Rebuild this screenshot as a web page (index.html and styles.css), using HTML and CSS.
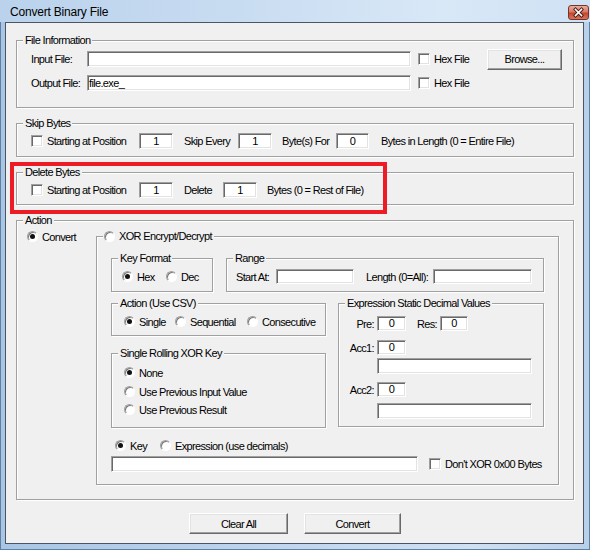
FILE: index.html
```html
<!DOCTYPE html>
<html>
<head>
<meta charset="utf-8">
<title>Convert Binary File</title>
<link rel="stylesheet" href="styles.css">
</head>
<body>
<div class="window">
  <div class="titlebar">
    <span class="title">Convert Binary File</span>
    <span class="close"><svg width="19" height="13" viewBox="0 0 19 13"><path d="M6.5 3.5 L12.5 9.5 M12.5 3.5 L6.5 9.5" stroke="#4a1a12" stroke-width="3.4" stroke-linecap="square" fill="none"/><path d="M6.5 3.5 L12.5 9.5 M12.5 3.5 L6.5 9.5" stroke="#fff" stroke-width="1.6" stroke-linecap="square" fill="none"/></svg></span>
  </div>
  <div class="client">
    <div class="group g-file">
      <div class="cap">File Information</div>
      <div class="row file-row">
        <span class="lbl w-file">Input File:</span>
        <span class="edit e-file"></span>
        <span class="chk"></span>
        <span class="lbl w-hex">Hex File</span>
        <span class="btn b-browse">Browse...</span>
      </div>
      <div class="row file-row second">
        <span class="lbl w-file">Output File:</span>
        <span class="edit e-file">file.exe_</span>
        <span class="chk"></span>
        <span class="lbl w-hex">Hex File</span>
      </div>
    </div>

    <div class="group g-skip">
      <div class="cap">Skip Bytes</div>
      <div class="row byte-row">
        <span class="chk"></span>
        <span class="lbl w-start">Starting at Position</span>
        <span class="edit e-num">1</span>
        <span class="lbl w-skip">Skip Every</span>
        <span class="edit e-num">1</span>
        <span class="lbl w-for">Byte(s) For</span>
        <span class="edit e-num e-narrow">0</span>
        <span class="lbl w-tail">Bytes in Length (0 = Entire File)</span>
      </div>
    </div>

    <div class="group g-del">
      <div class="cap">Delete Bytes</div>
      <div class="row byte-row">
        <span class="chk"></span>
        <span class="lbl w-start">Starting at Position</span>
        <span class="edit e-num">1</span>
        <span class="lbl w-delete">Delete</span>
        <span class="edit e-num">1</span>
        <span class="lbl w-tail2">Bytes (0 = Rest of File)</span>
      </div>
    </div>

    <div class="group g-action">
      <div class="cap">Action</div>
      <div class="act-body">
        <div class="convert-col">
          <div class="opt"><span class="radio on"></span><span>Convert</span></div>
        </div>
        <div class="group g-xor">
          <div class="cap cap-opt"><span class="radio"></span><span>XOR Encrypt/Decrypt</span></div>
          <div class="xor-body">
            <div class="xrow-a">
              <div class="group g-key">
                <div class="cap">Key Format</div>
                <div class="opts key-opts">
                  <span class="radio on"></span><span class="w-hexopt">Hex</span>
                  <span class="radio"></span><span>Dec</span>
                </div>
              </div>
              <div class="group g-range">
                <div class="cap">Range</div>
                <div class="row range-row">
                  <span class="lbl w-startat">Start At:</span>
                  <span class="edit e-start"></span>
                  <span class="lbl w-length">Length (0=All):</span>
                  <span class="edit e-length"></span>
                </div>
              </div>
            </div>

            <div class="xrow-b">
              <div class="xcol">
                <div class="group g-csv">
                  <div class="cap">Action (Use CSV)</div>
                  <div class="opts csv-opts">
                    <span class="radio on"></span><span class="w-single">Single</span>
                    <span class="radio"></span><span class="w-seq">Sequential</span>
                    <span class="radio"></span><span>Consecutive</span>
                  </div>
                </div>
                <div class="group g-roll">
                  <div class="cap">Single Rolling XOR Key</div>
                  <div class="opt roll-opt first"><span class="radio on"></span><span>None</span></div>
                  <div class="opt roll-opt second"><span class="radio"></span><span>Use Previous Input Value</span></div>
                  <div class="opt roll-opt third"><span class="radio"></span><span>Use Previous Result</span></div>
                </div>
              </div>
              <div class="group g-expr">
                <div class="cap">Expression Static Decimal Values</div>
                <div class="erow er-1">
                  <span class="elbl">Pre:</span>
                  <span class="edit e-small">0</span>
                  <span class="lbl w-res">Res:</span>
                  <span class="edit e-small e-res">0</span>
                </div>
                <div class="erow er-2">
                  <span class="elbl">Acc1:</span>
                  <span class="edit e-small">0</span>
                </div>
                <div class="erow er-3">
                  <span class="edit e-long"></span>
                </div>
                <div class="erow er-4">
                  <span class="elbl">Acc2:</span>
                  <span class="edit e-small">0</span>
                </div>
                <div class="erow er-5">
                  <span class="edit e-long"></span>
                </div>
              </div>
            </div>

            <div class="opts key-mode">
              <span class="radio on"></span><span class="w-key">Key</span>
              <span class="radio"></span><span>Expression (use decimals)</span>
            </div>

            <div class="row key-row">
              <span class="edit e-key"></span>
              <span class="chk"></span>
              <span class="lbl w-dont">Don't XOR 0x00 Bytes</span>
            </div>
          </div>
        </div>
      </div>
    </div>

    <div class="btnrow">
      <span class="btn b-clear">Clear All</span>
      <span class="btn b-convert">Convert</span>
    </div>
  </div>
  <div class="annot"></div>
</div>
</body>
</html>
```

FILE: styles.css
```css
* {
  box-sizing: border-box;
}

html, body {
  margin: 0;
  padding: 0;
  background: #ffffff;
}

body {
  font-family: "Liberation Sans", Arial, sans-serif;
  font-size: 11px;
  letter-spacing: -0.65px;
  color: #000000;
}

/* ---------- window frame ---------- */
.window {
  position: relative;
  width: 590px;
  height: 550px;
  display: flex;
  flex-direction: column;
  padding-bottom: 6px;
  background: linear-gradient(to right, #a9c5e5 0%, #bfd5ee 45%, #cfe0f3 80%, #b9d0ea 100%);
  box-shadow: inset 1px 0 0 #60809f, inset -1px 0 0 #60809f, inset 0 -1px 0 #60809f;
  overflow: hidden;
}

.titlebar {
  flex: none;
  height: 22px;
  display: flex;
  align-items: center;
  justify-content: space-between;
  padding: 2px 1px 0 10px;
  background: linear-gradient(to right, #bad2ec 0%, #c8dcf1 40%, #d9e8f7 75%, #cfe1f4 100%);
}

.title {
  font-size: 12px;
  letter-spacing: -0.2px;
  color: #000000;
}

.close {
  width: 21px;
  height: 15px;
  display: flex;
  align-items: center;
  justify-content: center;
  border: 1px solid #7a3226;
  border-radius: 3px;
  background: linear-gradient(to bottom, #e9ad9f 0%, #d97a64 45%, #c5432d 55%, #d4785e 100%);
}

.close svg {
  display: block;
}

.client {
  flex: 1;
  margin: 0 6px 0 5px;
  padding: 17px 0 0 10px;
  background: #f0f0f0;
  border: 1px solid #4b5563;
}

/* ---------- group boxes ---------- */
.group {
  flex: none;
  border: 1px solid #a0a0a0;
  box-shadow: inset 1px 1px 0 #ffffff, 1px 1px 0 #ffffff;
}

.cap {
  display: block;
  width: max-content;
  margin: -7px 0 -6px 6px;
  padding: 0 2px;
  line-height: 13px;
  background: #f0f0f0;
  white-space: nowrap;
}

.g-file,
.g-skip,
.g-del,
.g-action {
  width: 558px;
}

.g-file { height: 68px; }
.g-skip { height: 34px; margin-top: 15px; }
.g-del { height: 33px; margin-top: 15px; }
.g-action { height: 280px; margin-top: 15px; }

/* ---------- controls ---------- */
.row {
  display: flex;
  align-items: center;
  height: 16px;
}

.lbl {
  flex: none;
  white-space: nowrap;
}

.edit {
  flex: none;
  display: block;
  height: 16px;
  line-height: 14px;
  padding: 0 1px;
  background: #ffffff;
  border: 1px solid;
  border-color: #a0a0a0 #ffffff #ffffff #a0a0a0;
  box-shadow: inset 1px 1px 0 #696969, inset -1px -1px 0 #e3e3e3;
  white-space: nowrap;
  overflow: hidden;
}

.chk {
  flex: none;
  width: 12px;
  height: 12px;
  background: #ffffff;
  border: 1px solid;
  border-color: #a0a0a0 #ffffff #ffffff #a0a0a0;
  box-shadow: inset 1px 1px 0 #696969, inset -1px -1px 0 #e3e3e3;
}

.chk + .lbl {
  margin-left: 4px;
}

.radio {
  flex: none;
  position: relative;
  width: 11px;
  height: 11px;
  margin-right: 4px;
  border-radius: 50%;
  background: #ffffff;
  border: 1px solid;
  border-color: #a0a0a0 #ffffff #ffffff #a0a0a0;
  box-shadow: inset 1px 1px 0 #7a7a7a;
}

.radio.on::after {
  content: "";
  position: absolute;
  left: 2px;
  top: 2px;
  width: 5px;
  height: 5px;
  border-radius: 50%;
  background: #111111;
}

.btn {
  flex: none;
  display: flex;
  align-items: center;
  justify-content: center;
  height: 21px;
  background: #f0f0f0;
  border: 1px solid;
  border-color: #ffffff #696969 #696969 #ffffff;
  box-shadow: inset -1px -1px 0 #a0a0a0, inset 1px 1px 0 #e3e3e3;
  white-space: nowrap;
}

.opt,
.opts {
  display: flex;
  align-items: center;
  height: 13px;
  white-space: nowrap;
}

/* ---------- file information ---------- */
.file-row {
  margin-top: 10px;
  padding-left: 14px;
}

.file-row.second {
  margin-top: 8px;
}

.w-file { width: 56px; }
.e-file { width: 324px; }
.e-file + .chk { margin-left: 7px; }
.w-hex { width: 53px; }
.b-browse { width: 75px; }

/* ---------- skip / delete ---------- */
.byte-row {
  margin-top: 9px;
  padding-left: 14px;
}

.w-start { width: 92px; }
.e-num { width: 34px; text-align: center; }
.e-narrow { width: 33px; }
.w-skip { margin-left: 11px; width: 54px; }
.w-for { margin-left: 10px; width: 54px; }
.w-tail { margin-left: 12px; }
.w-delete { margin-left: 11px; width: 39px; }
.w-tail2 { margin-left: 10px; }

/* ---------- action ---------- */
.act-body {
  display: flex;
  margin-top: 15px;
}

.convert-col {
  flex: none;
  width: 79px;
  padding-left: 10px;
}

.convert-col .opt {
  margin-top: -6px;
}

.g-xor {
  width: 463px;
  height: 249px;
}

.cap-opt {
  display: flex;
  align-items: center;
  margin-left: 6px;
  padding-left: 1px;
}

.xor-body {
  padding: 21px 0 0 14px;
}

.xrow-a {
  display: flex;
  gap: 13px;
}

.g-key { width: 102px; height: 34px; }
.g-range { width: 318px; height: 34px; }

.key-opts {
  margin-top: 11px;
  padding-left: 10px;
}

.w-hexopt { width: 29px; }

.range-row {
  margin-top: 10px;
  padding-left: 9px;
  height: 15px;
}

.w-startat { width: 40px; }
.e-start { width: 78px; height: 15px; line-height: 13px; }
.w-length { margin-left: 12px; width: 67px; }
.e-length { width: 99px; height: 15px; line-height: 13px; }

.xrow-b {
  display: flex;
  gap: 12px;
  margin-top: 11px;
}

.xcol {
  flex: none;
  width: 215px;
}

.g-csv { width: 215px; height: 33px; }
.g-roll { width: 215px; height: 75px; margin-top: 17px; }

.csv-opts {
  margin-top: 11px;
  padding-left: 12px;
}

.w-single { width: 36px; }
.w-seq { width: 57px; }

.roll-opt { padding-left: 12px; }
.roll-opt.first { margin-top: 12px; }
.roll-opt.second { margin-top: 6px; }
.roll-opt.third { margin-top: 5px; }

.g-expr { width: 206px; height: 124px; }

.erow {
  display: flex;
  align-items: center;
}

.elbl {
  flex: none;
  width: 38px;
  padding-right: 3px;
  text-align: right;
  white-space: nowrap;
}

.e-small { width: 29px; height: 15px; line-height: 13px; text-align: center; }
.e-res { width: 28px; }
.w-res { margin-left: 11px; width: 23px; }
.e-long { width: 155px; height: 16px; margin-left: 38px; }

.er-1 { margin-top: 12px; }
.er-2 { margin-top: 9px; }
.er-3 { margin-top: 3px; }
.er-4 { margin-top: 8px; }
.er-5 { margin-top: 6px; }

.key-mode {
  margin-top: 11px;
  padding-left: 4px;
}

.w-key { width: 30px; }

.key-row {
  margin-top: 4px;
}

.e-key { width: 307px; }
.e-key + .chk { margin-left: 11px; }

/* ---------- buttons ---------- */
.btnrow {
  width: 558px;
  display: flex;
  justify-content: center;
  gap: 16px;
  margin-top: 13px;
}

.b-clear { width: 99px; }
.b-convert { width: 97px; }

/* ---------- annotation overlay ---------- */
.annot {
  position: absolute;
  left: 10px;
  top: 162px;
  width: 377px;
  height: 52px;
  border: 4px solid #ed1c24;
}
```
